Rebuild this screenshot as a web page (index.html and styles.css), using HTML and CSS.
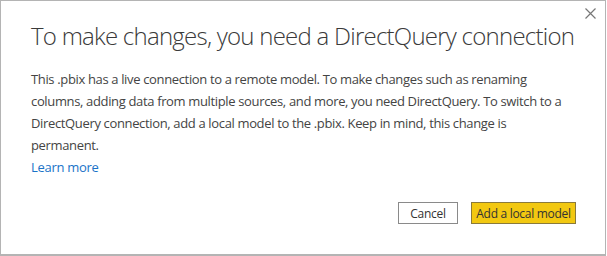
FILE: index.html
```html
<!DOCTYPE html>
<html lang="en">
<head>
  <meta charset="UTF-8" />
  <title>DirectQuery connection</title>
  <link rel="stylesheet" href="styles.css">
</head>
<body>
  <div class="dialog">
    <button class="btn-close" aria-label="Close">
      <svg width="11" height="11" viewBox="0 0 11 11">
        <path d="M0.5 0.5 L10.5 10.5 M10.5 0.5 L0.5 10.5" stroke="#777" stroke-width="1.2" fill="none"/>
      </svg>
    </button>

    <h2>To make changes, you need a DirectQuery connection</h2>

    <p class="message">This .pbix has a live connection to a remote model. To make changes such as renaming columns, adding data from multiple sources, and more, you need DirectQuery. To switch to a DirectQuery connection, add a local model to the .pbix. Keep in mind, this change is permanent.</p>

    <a class="learn-more" href="#">Learn more</a>

    <div class="actions">
      <button class="btn btn-cancel">Cancel</button>
      <button class="btn btn-primary">Add a local model</button>
    </div>
  </div>
</body>
</html>
```

FILE: styles.css
```css
body {
  margin: 0;
  padding: 0;
  background: #fff;
  font-family: 'Open Sans', 'Noto Sans', sans-serif;
}

.dialog {
  position: relative;
  width: 606px;
  height: 256px;
  box-sizing: border-box;
  border: 1px solid #b4b4b4;
  border-bottom-width: 2px;
  padding: 17px 29px 0 30px;
  display: flex;
  flex-direction: column;
  align-items: flex-start;
}

.btn-close {
  position: absolute;
  top: 7px;
  right: 9px;
  padding: 0;
  border: none;
  background: none;
  line-height: 0;
  cursor: pointer;
}

h2 {
  margin: 0;
  font-size: 24px;
  font-weight: 300;
  line-height: 36px;
  color: #3a3a3a;
  letter-spacing: -0.75px;
  white-space: nowrap;
}

.message {
  margin: 14px 0 0 0;
  width: 540px;
  font-size: 13px;
  line-height: 22px;
  color: #444;
  letter-spacing: -0.35px;
}

.learn-more {
  margin-top: 0;
  font-size: 13px;
  line-height: 22px;
  color: #1a73c8;
  text-decoration: none;
  letter-spacing: -0.3px;
}

.actions {
  align-self: flex-end;
  display: flex;
  gap: 13px;
  margin-top: 24px;
}

.btn {
  height: 22px;
  padding: 0;
  font-family: inherit;
  font-size: 12px;
  color: #333;
  background: #fff;
  border: 1px solid #8a8a8a;
  cursor: pointer;
  letter-spacing: -0.3px;
  white-space: nowrap;
}

.btn-cancel {
  width: 60px;
}

.btn-primary {
  width: 105px;
  background: #f2c811;
  border-color: #8a7a3a;
}
```
